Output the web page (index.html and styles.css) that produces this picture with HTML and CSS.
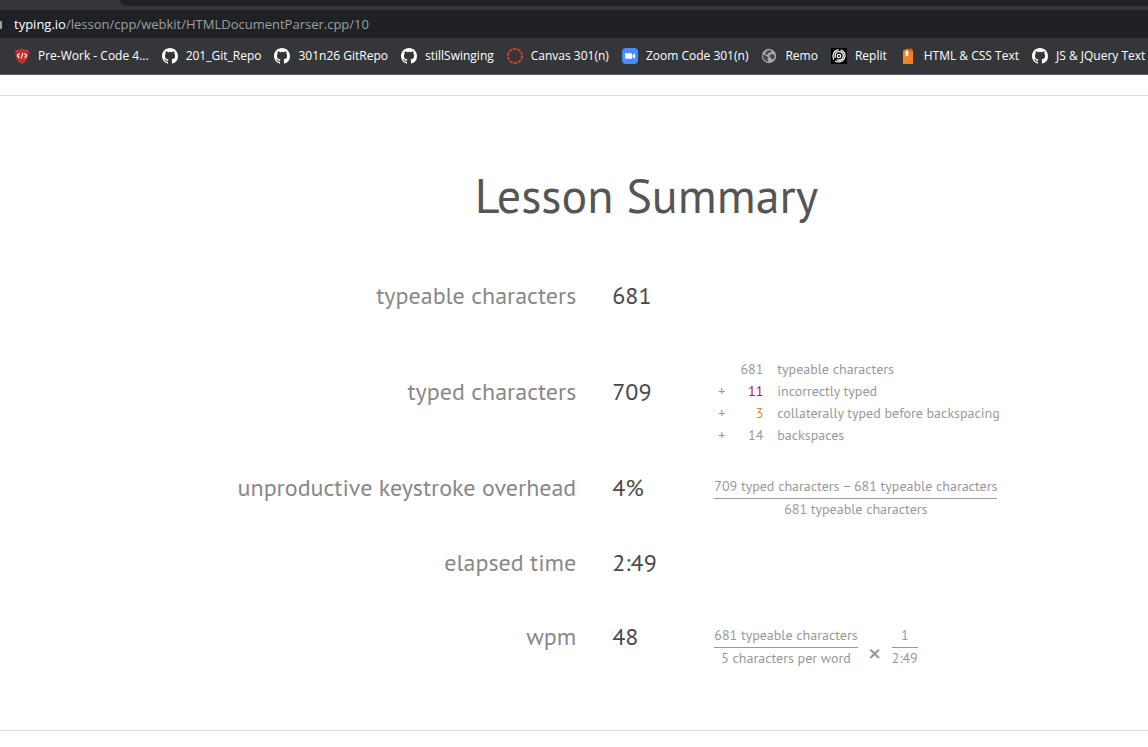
FILE: index.html
```html
<!DOCTYPE html>
<html lang="en">
<head>
<meta charset="utf-8">
<title>Lesson Summary</title>
<link rel="stylesheet" href="styles.css">
</head>
<body>
<svg class="symbols" aria-hidden="true">
  <symbol id="github" viewBox="0 0 16 16"><path fill="#fff" d="M8 0C3.58 0 0 3.58 0 8c0 3.54 2.29 6.53 5.47 7.59.4.07.55-.17.55-.38 0-.19-.01-.82-.01-1.49-2.01.37-2.53-.49-2.69-.94-.09-.23-.48-.94-.82-1.13-.28-.15-.68-.52-.01-.53.63-.01 1.08.58 1.23.82.72 1.21 1.87.87 2.33.66.07-.52.28-.87.51-1.07-1.78-.2-3.64-.89-3.64-3.95 0-.87.31-1.59.82-2.15-.08-.2-.36-1.02.08-2.12 0 0 .67-.21 2.2.82a7.6 7.6 0 0 1 4 0c1.53-1.04 2.2-.82 2.2-.82.44 1.1.16 1.92.08 2.12.51.56.82 1.27.82 2.15 0 3.07-1.87 3.75-3.65 3.95.29.25.54.73.54 1.48 0 1.07-.01 1.93-.01 2.2 0 .21.15.46.55.38A8.01 8.01 0 0 0 16 8c0-4.42-3.58-8-8-8z"/></symbol>
</svg>
<header class="browser">
  <div class="tabstrip"><div class="tab"></div><div class="strip"></div></div>
  <div class="address"><svg class="lock" viewBox="0 0 3 10" aria-hidden="true"><path fill="#9aa0a6" d="M0 2h1q1 0 1 1v6q0 1-1 1H0z"/></svg><p class="url"><span class="host">typing.io</span>/lesson/cpp/webkit/HTMLDocumentParser.cpp/10</p></div>
  <nav class="bookmarks" aria-label="Bookmarks">
    <a class="bookmark" href="#"><svg class="icon" viewBox="0 0 16 16" aria-hidden="true"><path fill="#c9302c" d="M8 .5c2 1 4 1.500 6.600 1.500.5 6-.8 11-6.600 14C2.200 13 .9 8 1.400 2 4 2 6 1.500 8 .5z"/><path fill="none" stroke="#fff" stroke-width="1.100" d="M5.500 5.500 3.300 7.700 5.500 9.900M10.500 5.500l2.200 2.200-2.200 2.200M8.900 5 7.100 10.400"/></svg>Pre-Work - Code 4...</a>
    <a class="bookmark" href="#"><svg class="icon" aria-hidden="true"><use href="#github"/></svg>201_Git_Repo</a>
    <a class="bookmark" href="#"><svg class="icon" aria-hidden="true"><use href="#github"/></svg>301n26 GitRepo</a>
    <a class="bookmark" href="#"><svg class="icon" aria-hidden="true"><use href="#github"/></svg>stillSwinging</a>
    <a class="bookmark" href="#"><svg class="icon" viewBox="0 0 16 16" aria-hidden="true"><circle cx="8" cy="8" r="7.100" fill="none" stroke="#e03e36" stroke-width="1.800" stroke-dasharray="3.400 1.060"/></svg>Canvas 301(n)</a>
    <a class="bookmark" href="#"><svg class="icon" viewBox="0 0 16 16" aria-hidden="true"><rect width="16" height="16" rx="4" fill="#4a8cff"/><path fill="#fff" d="M3 5.200h5.800q1.200 0 1.200 1.200v4.400H4.200Q3 10.800 3 9.600zM10.600 7.100 13 5.300v5.400l-2.400-1.800z"/></svg>Zoom Code 301(n)</a>
    <a class="bookmark" href="#"><svg class="icon" viewBox="0 0 16 16" aria-hidden="true"><circle cx="8" cy="8" r="7.200" fill="#a3a6aa"/><path fill="#45474b" d="M1.800 6.500 5.600 8l1.800 1.500-.9 1.600.9 2.600C4.500 13.500 1.800 11 1.800 6.500zM7 2.300l3.800-.1L9.700 4 7 5.200 6 7 4 6.500 5 4zM9 6.800l3-.8 1.800 2.300-1.300 2.900-2-.2-.7-2-1.600-.5z"/></svg>Remo</a>
    <a class="bookmark" href="#"><svg class="icon" viewBox="0 0 16 16" aria-hidden="true"><path fill="#000" d="M0 0h16v16H0z"/><g fill="none" stroke="#fff" stroke-linecap="round"><circle cx="8" cy="8" r="1.700" stroke-width="1.300"/><path stroke-width="1.300" d="M4.300 9.500C3.200 6.500 5 3.600 8.200 3.700c3 .1 4.800 2.800 3.900 5.500-.9 2.400-3.400 3.500-6 2.600"/><path stroke-width="1.200" d="M2.600 11.200C.8 7.300 2.800 2.400 7.200 1.800M10 2.100c3.800 1.300 5.200 5.600 3.200 8.800-2 3-5.800 3.800-8.700 2.300"/></g></svg>Replit</a>
    <a class="bookmark" href="#"><svg class="icon" viewBox="0 0 16 16" aria-hidden="true"><path fill="#f48024" d="M3 2.500 8.500.5V2.500H13V16H3z"/><path fill="#d9601a" d="M8.500 1 12 .6v2H8.500z"/><path fill="#fff" d="M5.600 2.800h2.600v6L6.900 7.500 5.600 8.800z"/></svg>HTML &amp; CSS Text</a>
    <a class="bookmark" href="#"><svg class="icon" aria-hidden="true"><use href="#github"/></svg>JS &amp; JQuery Text</a>
  </nav>
</header>
<main class="page">
  <section class="summary">
    <h1 class="title">Lesson Summary</h1>
    <table class="stats">
      <colgroup><col class="col-label"><col class="col-value"><col></colgroup>
      <tbody>
        <tr><th scope="row">typeable characters</th><td class="value">681</td><td class="detail"></td></tr>
        <tr class="tall"><th scope="row">typed characters</th><td class="value">709</td><td class="detail">
          <table class="breakdown">
            <tbody>
              <tr><td class="sign"></td><td class="count">681</td><td>typeable characters</td></tr>
              <tr><td class="sign">+</td><td class="count incorrect">11</td><td>incorrectly typed</td></tr>
              <tr><td class="sign">+</td><td class="count collateral">3</td><td>collaterally typed before backspacing</td></tr>
              <tr><td class="sign">+</td><td class="count">14</td><td>backspaces</td></tr>
            </tbody>
          </table></td></tr>
        <tr><th scope="row">unproductive keystroke overhead</th><td class="value">4%</td><td class="detail">
          <div class="formula"><div class="fraction"><span class="numerator">709 typed characters − 681 typeable characters</span><span class="denominator">681 typeable characters</span></div></div></td></tr>
        <tr><th scope="row">elapsed time</th><td class="value">2:49</td><td class="detail"></td></tr>
        <tr class="last"><th scope="row">wpm</th><td class="value">48</td><td class="detail">
          <div class="formula"><div class="fraction"><span class="numerator">681 typeable characters</span><span class="denominator">5 characters per word</span></div><span class="times">×</span><div class="fraction"><span class="numerator">1</span><span class="denominator">2:49</span></div></div></td></tr>
      </tbody>
    </table>
  </section>
</main>
</body>
</html>
```
FILE: styles.css
```css
* { box-sizing: border-box; }
body { margin: 0; background: #fff; font-family: "PT Sans", "Noto Sans", sans-serif; overflow-x: hidden; }
.symbols { display: none; }

.browser { background: #35363a; border-bottom: 1px solid #5b5c60; font-family: "Segoe UI", "Open Sans", sans-serif; }
.tabstrip { display: flex; height: 6px; }
.tab { width: 120px; }
.strip { flex: 1; background: #202124; border-bottom-left-radius: 6px; }
.address { display: flex; align-items: center; height: 28px; margin-top: 4px; background: #202124; }
.lock { width: 3px; height: 10px; margin-right: 11px; }
.url { margin: 0; font-size: 13px; line-height: 28px; color: #9aa0a6; white-space: nowrap; }
.host { color: #fff; }
.bookmarks { display: flex; gap: 13px; height: 36px; padding-left: 14px; align-items: center; overflow: hidden; }
.bookmark { display: flex; align-items: center; flex: none; gap: 8px; font-size: 12px; line-height: 16px; color: #fff; text-decoration: none; white-space: nowrap; }
.icon { width: 16px; height: 16px; flex: none; }

.page { padding-top: 20px; }
.summary { padding: 69px 0 56px 145px; border-top: 1px solid #ddd; border-bottom: 1px solid #ddd; }
.title { margin: 0 0 33px; font-size: 48px; line-height: 60px; font-weight: 400; text-align: center; color: #555; }
.stats { width: 100%; table-layout: fixed; border-collapse: collapse; }
.col-label { width: 43%; }
.col-value { width: 138px; }
.stats tr { height: 75px; }
.stats .tall { height: 117px; }
.stats .last { height: 74px; }
.stats th, .stats td { padding: 0; vertical-align: middle; }
.stats th { font-size: 24px; line-height: 30px; font-weight: 400; text-align: right; color: #888; white-space: nowrap; }
.stats .value { padding-left: 36px; font-size: 24px; line-height: 30px; color: #4a4a4a; }
.stats .detail { padding-top: 20px; font-size: 14px; line-height: 22px; color: #999; }
.breakdown { border-collapse: collapse; white-space: nowrap; }
.stats .breakdown tr { height: 22px; }
.stats .sign { width: 16px; padding-left: 4px; }
.stats .count { width: 47px; padding-right: 14px; text-align: right; }
.stats .incorrect { color: #b01040; }
.stats .collateral { color: #e8892b; }
.formula { display: flex; align-items: flex-end; padding-bottom: 2px; white-space: nowrap; }
.fraction { display: flex; flex-direction: column; text-align: center; }
.numerator { padding-bottom: 1px; border-bottom: 1px solid #999; }
.denominator { line-height: 20px; }
.times { margin: 0 10px; font-size: 28px; line-height: 30px; }
```
